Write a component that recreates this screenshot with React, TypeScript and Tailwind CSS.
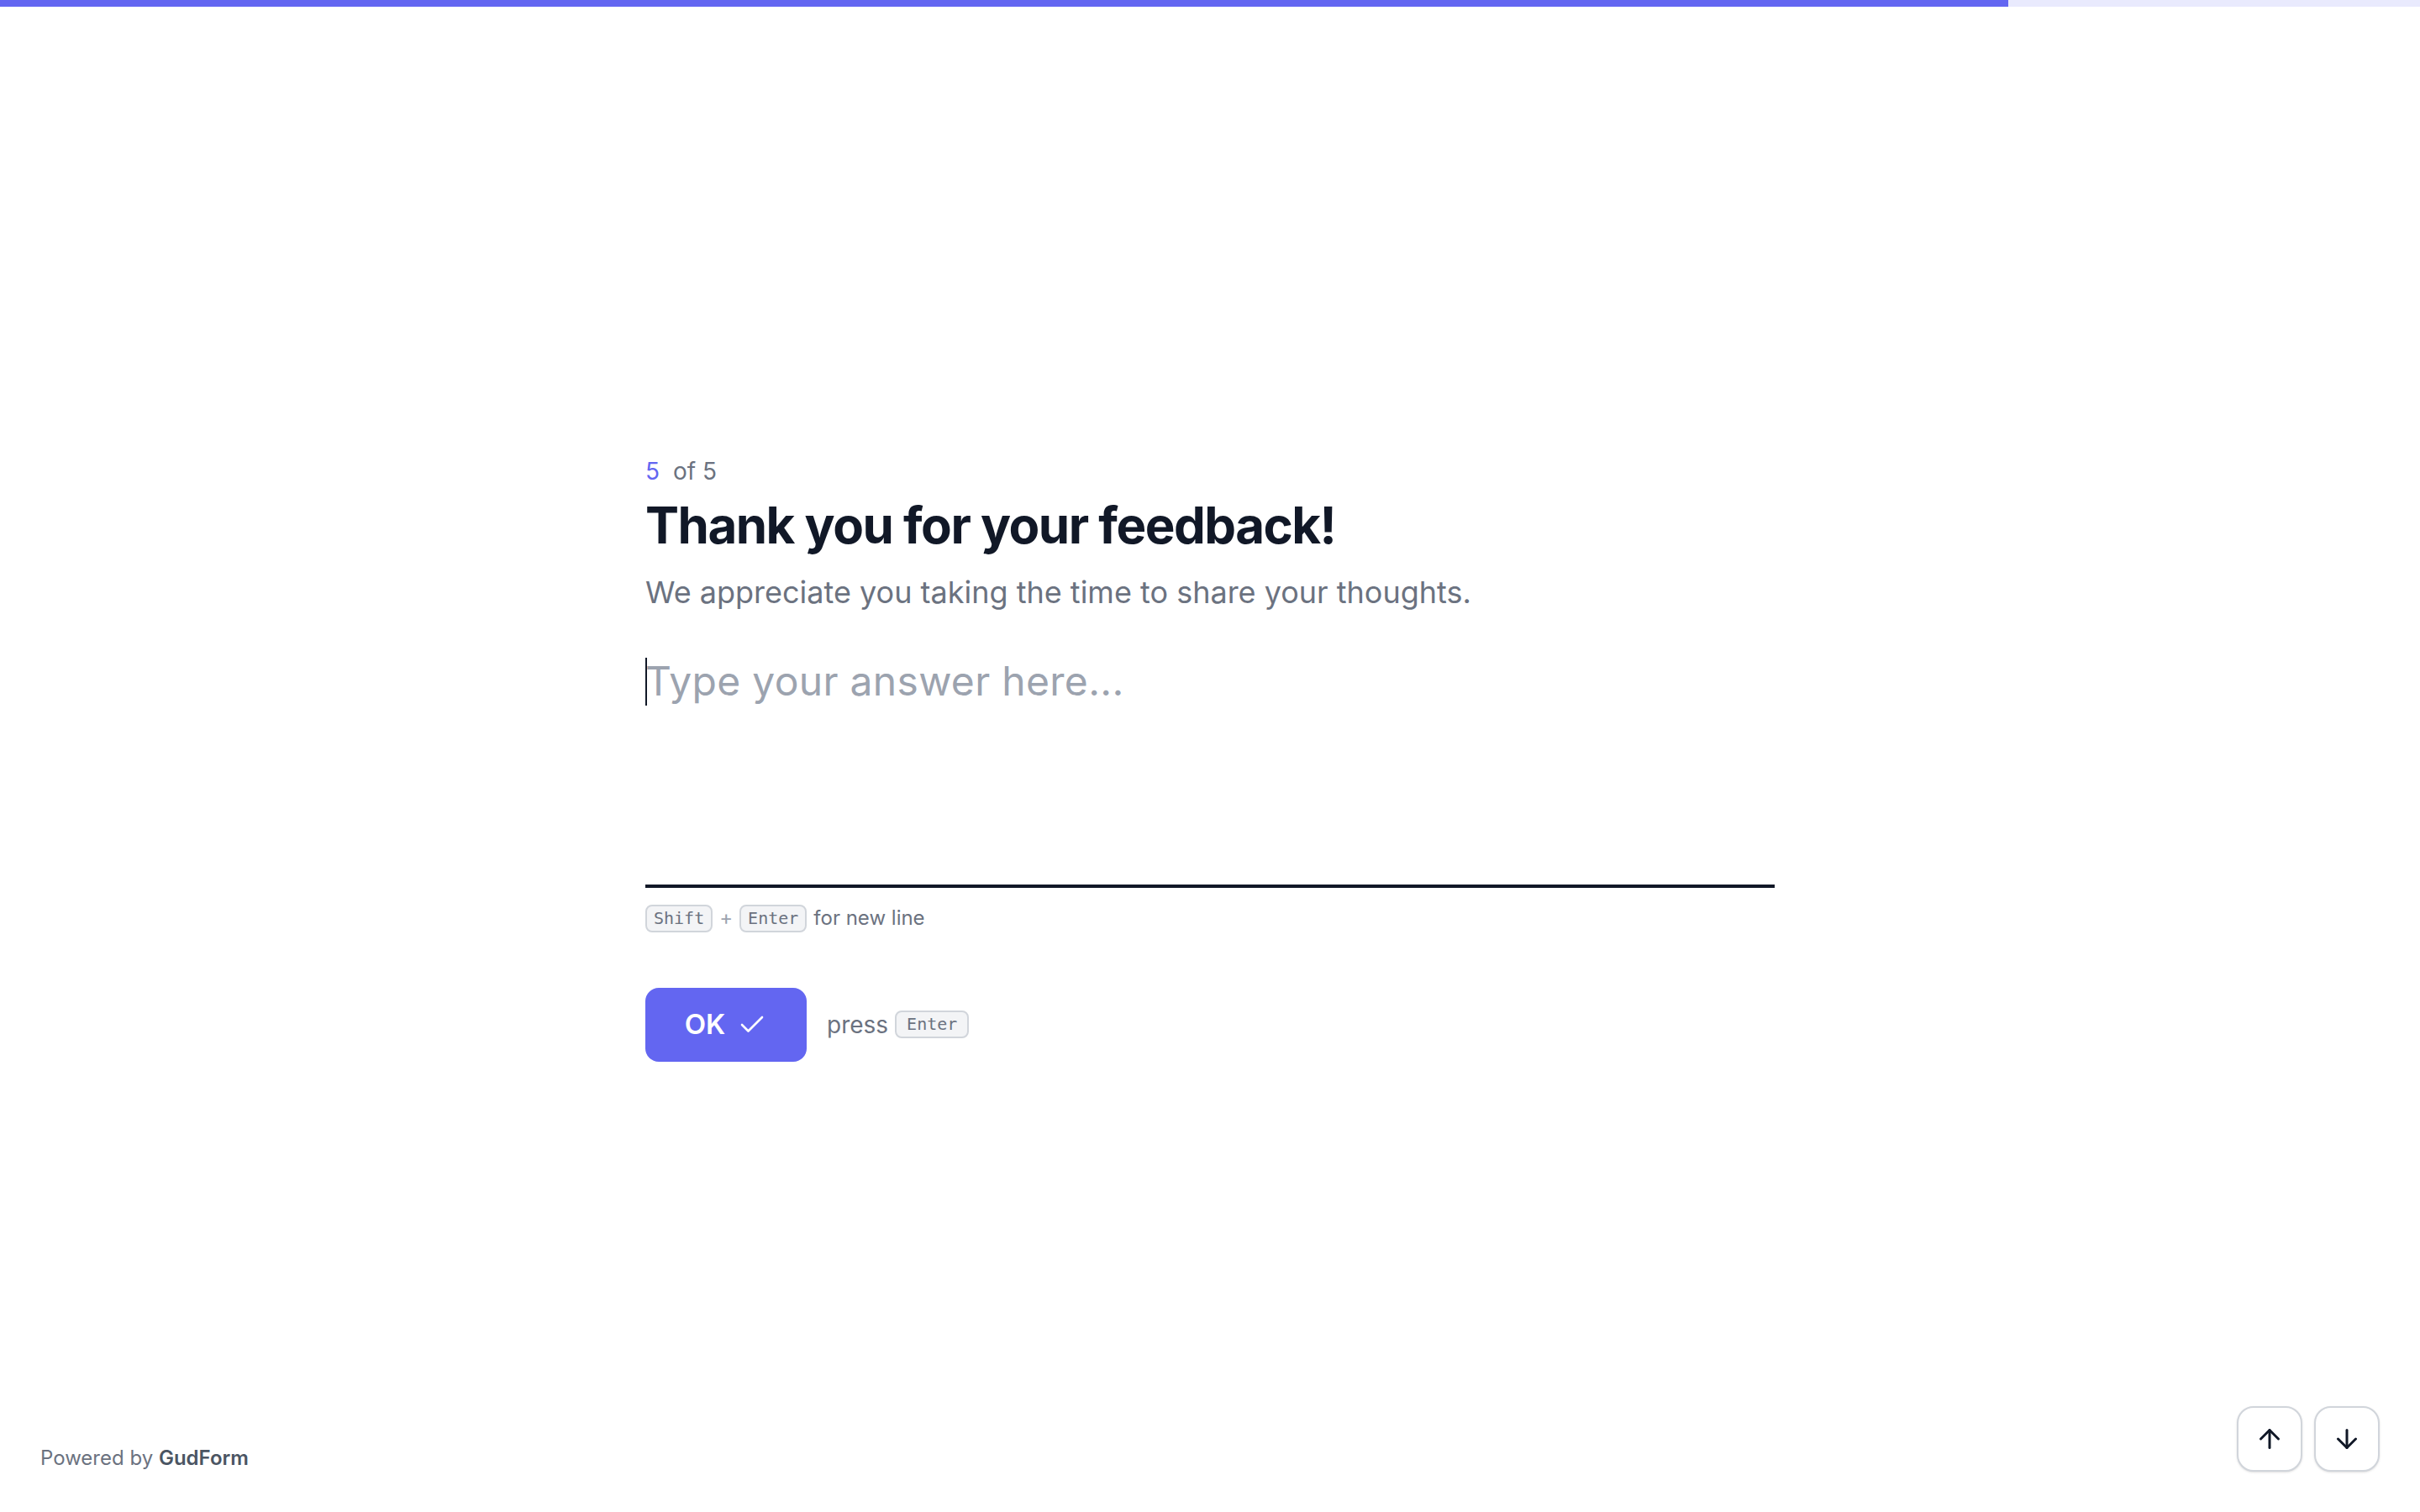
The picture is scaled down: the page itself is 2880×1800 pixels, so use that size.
import React from "react";
import { ArrowDown, ArrowUp, Check } from "lucide-react";

const font = { fontFamily: "Inter, 'Noto Sans', sans-serif" };

const Kbd = ({ children, className = "" }: { children: React.ReactNode; className?: string }) => (
  <kbd
    className={
      "inline-flex items-center rounded-[8px] border-2 border-[#d1d5db] bg-[#f3f4f6] py-[2px] font-['DejaVu_Sans_Mono',monospace] text-[20px] leading-[25px] text-[#6b7280] " +
      className
    }
  >
    {children}
  </kbd>
);

const App = () => {
  return (
    <div className="flex h-screen flex-col bg-white" style={font}>
      {/* progress */}
      <div className="h-2 w-full bg-[#e9eafd]">
        <div className="h-full w-[83%] bg-[#6366f1]" />
      </div>

      <main className="flex flex-1 items-center justify-center pt-[122px]">
        <section className="w-[1344px]">
          <div className="flex items-center gap-[16px] text-[28px] leading-[40px]">
            <span className="text-[#6366f1]">5</span>
            <span className="text-[#6b7280]">of 5</span>
          </div>
          <h1 className="mt-2 text-[60px] font-bold leading-[72px] tracking-[-1.5px] text-[#111827]">
            Thank you for your feedback!
          </h1>
          <p className="mt-4 text-[36px] leading-[56px] text-[#6b7280]">
            We appreciate you taking the time to share your thoughts.
          </p>

          <div className="relative mt-[30px]">
            <textarea
              rows={4}
              placeholder="Type your answer here..."
              className="block h-[294px] w-full resize-none border-0 border-b-4 border-[#111827] bg-transparent px-0 pt-4 pb-[18px] text-[48px] leading-[64px] tracking-[0.3px] text-[#111827] outline-none placeholder:text-[#9ca3af]"
            />
            <span className="pointer-events-none absolute left-0 top-[20px] h-[57px] w-[2px] bg-[#111827]" />
          </div>

          <div className="mt-5 flex items-center gap-2 text-[24px] leading-[32px] text-[#6b7280]">
            <Kbd className="px-[8px]">Shift</Kbd>
            <span className="text-[#9ca3af]">+</span>
            <Kbd className="px-[8px]">Enter</Kbd>
            <span>for new line</span>
          </div>

          <div className="mt-[66px] flex items-center">
            <button className="flex h-[88px] w-[192px] items-center justify-center gap-[14px] rounded-[16px] bg-[#6366f1] text-[33px] font-semibold text-white">
              OK
              <Check size={36} strokeWidth={1.75} />
            </button>
            <span className="ml-6 text-[28px] leading-[40px] text-[#6b7280]">press</span>
            <Kbd className="ml-2 px-[12px]">Enter</Kbd>
          </div>
        </section>
      </main>

      <footer className="flex items-end justify-between px-12 pb-12">
        <p className="text-[24px] leading-[32px] text-[#6b7280]">
          Powered by <span className="font-semibold text-[#4b5563]">GudForm</span>
        </p>
        <div className="flex gap-[14px]">
          <button className="flex h-[78px] w-[78px] items-center justify-center rounded-[20px] border-2 border-[#d1d5db] bg-white text-[#111827] shadow-sm">
            <ArrowUp size={36} strokeWidth={2} />
          </button>
          <button className="flex h-[78px] w-[78px] items-center justify-center rounded-[20px] border-2 border-[#d1d5db] bg-white text-[#111827] shadow-sm">
            <ArrowDown size={36} strokeWidth={2} />
          </button>
        </div>
      </footer>
    </div>
  );
};

export default App;
